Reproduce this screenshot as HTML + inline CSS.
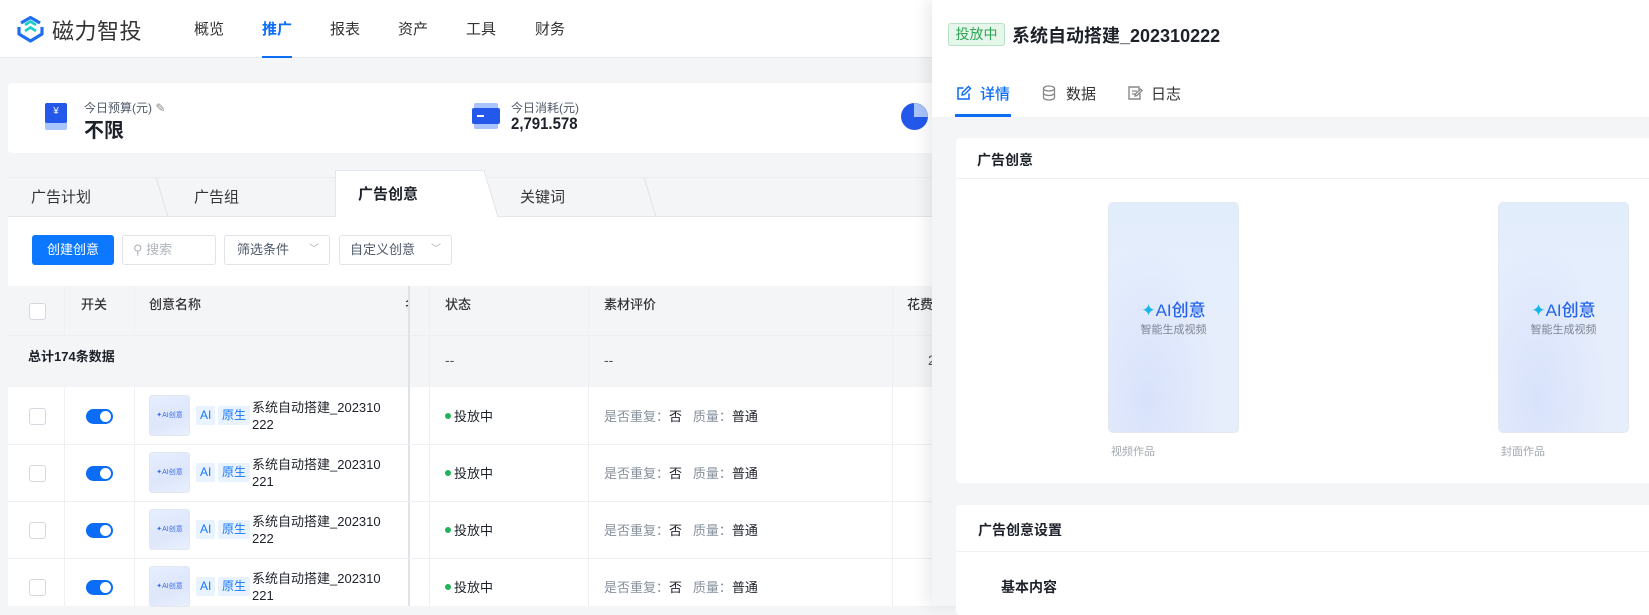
<!DOCTYPE html>
<html><head><meta charset="utf-8">
<style>
*{margin:0;padding:0;box-sizing:border-box}
body{width:1649px;height:606px;overflow:hidden;background:#f4f5f7;font-family:"Liberation Sans","Noto Sans CJK SC",sans-serif;color:#1d2129;position:relative;font-size:14px}
.a{position:absolute;white-space:nowrap}
.hdr{position:absolute;left:0;top:0;width:1649px;height:58px;background:#fff;border-bottom:1px solid #e8eaed}
.nav{font-size:15px;color:#333;top:18px}
.card{position:absolute;background:#fff;border-radius:4px}
.th{font-size:13px;color:#333;font-weight:500}
.cb{position:absolute;width:17px;height:17px;border:1px solid #d5d8de;border-radius:3px;background:#fff}
.tg{position:absolute;width:27px;height:15px;border-radius:8px;background:#0b6cf6}
.tg:after{content:"";position:absolute;right:2px;top:2px;width:11px;height:11px;border-radius:50%;background:#fff}
.thumb{position:absolute;width:41px;height:41px;border:1px solid #e3e7ef;border-radius:3px;background:linear-gradient(160deg,#e6efff,#dde6fb 60%,#e9f0fd);font-size:7px;color:#3a6cf0;text-align:center;line-height:39px}
.tag{position:absolute;height:19px;line-height:19px;padding:0 4px;background:#e8f3ff;color:#1677ff;font-size:12px;border-radius:2px}
.nm{position:absolute;font-size:13px;line-height:17px;color:#1d2129}
.dot{position:absolute;width:6px;height:6px;border-radius:50%;background:#21b35b}
.rowline{position:absolute;left:8px;width:924px;height:1px;background:#eef0f3}
.gl{color:#86909c}
.img{position:absolute;width:131px;height:231px;border:1px solid #e4e8f0;border-radius:5px;background:radial-gradient(ellipse at 30% 85%,#d8e2fb 0%,rgba(216,226,251,0) 55%),linear-gradient(180deg,#e2edfc 0%,#e6eefc 55%,#e6edfb 100%);text-align:center}
.img .t1{position:absolute;left:0;right:0;top:93px;font-size:17px;color:#2563eb;font-weight:500}
.img .t2{position:absolute;left:0;right:0;top:118px;font-size:11px;color:#7d8592}
</style></head><body>

<div class="hdr"></div>
<svg class="a" style="left:15px;top:14px" width="31" height="30" viewBox="0 0 31 30"><path d="M6 9 L15.5 3.5 L25 9 M27 13 V20 L15.5 27 L4 20 V13" fill="none" stroke="#1e6ff0" stroke-width="3.2" stroke-linejoin="round"/><path d="M10 11 L15.5 7.5 L21 11 M10 17 L15.5 13.5 L21 17" fill="none" stroke="#18d0c8" stroke-width="2.8"/></svg>
<div class="a" style="left:52px;top:14px;font-size:22px;color:#333;letter-spacing:0.5px">磁力智投</div>
<div class="a nav" style="left:194px">概览</div>
<div class="a nav" style="left:262px;color:#0b6cf6;font-weight:600">推广</div>
<div class="a" style="left:262px;top:56px;width:30px;height:2px;background:#0b6cf6"></div>
<div class="a nav" style="left:330px">报表</div>
<div class="a nav" style="left:398px">资产</div>
<div class="a nav" style="left:466px">工具</div>
<div class="a nav" style="left:535px">财务</div>

<div class="card" style="left:8px;top:83px;width:940px;height:70px"></div>
<div class="a" style="left:45px;top:103px;width:22px;height:27px;background:#a9c3fb;border-radius:2px"></div>
<div class="a" style="left:45px;top:103px;width:22px;height:20px;background:#2358ea;border-radius:2px;color:#fff;font-size:10px;text-align:center;line-height:18px">¥</div>
<div class="a" style="left:84px;top:99px;font-size:12px;color:#4e5969">今日预算(元) <span style="color:#888">✎</span></div>
<div class="a" style="left:84px;top:114px;font-size:20px;font-weight:700">不限</div>
<div class="a" style="left:474px;top:103px;width:24px;height:26px;background:#a9c3fb;border-radius:2px"></div>
<div class="a" style="left:472px;top:108px;width:28px;height:16px;background:#2358ea;border-radius:2px"></div>
<div class="a" style="left:477px;top:115px;width:7px;height:2px;background:#fff"></div>
<div class="a" style="left:511px;top:99px;font-size:12px;color:#4e5969">今日消耗(元)</div>
<div class="a" style="left:511px;top:114px;font-size:17px;font-weight:700;transform:scaleX(0.88);transform-origin:left">2,791.578</div>
<div class="a" style="left:901px;top:103px;width:27px;height:27px;border-radius:50%;background:#2358ea"></div>
<div class="a" style="left:914px;top:103px;width:14px;height:14px;border-radius:0 14px 0 0;background:#a9c3fb"></div>

<!-- tabs -->
<div class="a" style="left:8px;top:177px;width:924px;height:40px;background:#f4f5f7;border-bottom:1px solid #e4e7ec;border-top:1px solid #eceef2"></div>
<svg class="a" style="left:150px;top:177px" width="540" height="40"><path d="M6 0 L18 40 M494 0 L506 40" stroke="#e1e4ea" fill="none"/></svg>
<div class="a" style="left:335px;top:170px;width:150px;height:47px;background:#fff;border:1px solid #e4e7ec;border-bottom:none"></div>
<svg class="a" style="left:483px;top:170px" width="16" height="47"><path d="M0 0.5 L2 0.5 L15 47 L0 47Z" fill="#fff"/><path d="M1 0.5 L15 47" stroke="#e1e4ea" fill="none"/></svg>
<div class="a" style="left:31px;top:186px;font-size:15px;color:#333">广告计划</div>
<div class="a" style="left:194px;top:186px;font-size:15px;color:#333">广告组</div>
<div class="a" style="left:358px;top:183px;font-size:15px;font-weight:700">广告创意</div>
<div class="a" style="left:520px;top:186px;font-size:15px;color:#333">关键词</div>

<div class="a" style="left:8px;top:217px;width:924px;height:389px;background:#fff"></div>
<div class="a" style="left:32px;top:235px;width:82px;height:30px;background:#0b78ff;border-radius:3px;color:#fff;font-size:13px;text-align:center;line-height:30px">创建创意</div>
<div class="a" style="left:122px;top:235px;width:94px;height:30px;border:1px solid #e0e3e8;border-radius:3px;font-size:13px;color:#b0b5bd;line-height:28px;padding-left:10px">&#9906; 搜索</div>
<div class="a" style="left:224px;top:235px;width:106px;height:30px;border:1px solid #e0e3e8;border-radius:3px;font-size:13px;color:#4e5969;line-height:28px;padding-left:12px">筛选条件<span style="position:absolute;right:10px;color:#aaa;font-size:10px">﹀</span></div>
<div class="a" style="left:339px;top:235px;width:113px;height:30px;border:1px solid #e0e3e8;border-radius:3px;font-size:13px;color:#4e5969;line-height:28px;padding-left:10px">自定义创意<span style="position:absolute;right:10px;color:#aaa;font-size:10px">﹀</span></div>

<!-- table -->
<div class="a" style="left:8px;top:286px;width:924px;height:101px;background:#f4f5f7"></div>
<div class="a" style="left:8px;top:335px;width:924px;height:1px;background:#eceef2"></div>
<div class="cb" style="left:29px;top:303px"></div>
<div class="a th" style="left:81px;top:294px">开关</div>
<div class="a th" style="left:149px;top:294px">创意名称</div>
<div class="a th" style="left:405px;top:294px;width:5px;overflow:hidden">名</div>
<div class="a th" style="left:445px;top:294px">状态</div>
<div class="a th" style="left:604px;top:294px">素材评价</div>
<div class="a th" style="left:907px;top:294px">花费</div>
<div class="a" style="left:28px;top:346px;font-size:13px;font-weight:600">总计174条数据</div>
<div class="a" style="left:445px;top:352px;color:#555">--</div>
<div class="a" style="left:604px;top:352px;color:#555">--</div>
<div class="a" style="left:928px;top:352px;color:#555">2</div>
<div class="a" style="left:408px;top:286px;width:2px;height:320px;background:#dfe2e7"></div>
<div class="a" style="left:64px;top:286px;width:1px;height:50px;background:#eef0f3"></div>
<div class="a" style="left:64px;top:387px;width:1px;height:220px;background:#eef0f3"></div>
<div class="a" style="left:134px;top:286px;width:1px;height:50px;background:#eef0f3"></div>
<div class="a" style="left:134px;top:387px;width:1px;height:220px;background:#eef0f3"></div>
<div class="a" style="left:429px;top:286px;width:1px;height:320px;background:#eef0f3"></div>
<div class="a" style="left:588px;top:286px;width:1px;height:320px;background:#eef0f3"></div>
<div class="a" style="left:892px;top:286px;width:1px;height:320px;background:#eef0f3"></div>

<div class="rowline" style="top:444px"></div>
<div class="rowline" style="top:501px"></div>
<div class="rowline" style="top:558px"></div>

<!-- rows -->
<div class="cb" style="left:29px;top:408px"></div><div class="tg" style="left:86px;top:409px"></div>
<div class="thumb" style="left:149px;top:395px">✦AI创意</div><div class="tag" style="left:196px;top:406px">AI</div><div class="tag" style="left:218px;top:406px">原生</div>
<div class="nm" style="left:252px;top:399px">系统自动搭建_202310<br>222</div>
<div class="dot" style="left:445px;top:413px"></div><div class="a" style="left:454px;top:406px;font-size:13px">投放中</div>
<div class="a" style="left:604px;top:406px;font-size:13px"><span class="gl">是否重复：</span>否&nbsp;&nbsp;&nbsp;<span class="gl">质量：</span>普通</div>

<div class="cb" style="left:29px;top:465px"></div><div class="tg" style="left:86px;top:466px"></div>
<div class="thumb" style="left:149px;top:452px">✦AI创意</div><div class="tag" style="left:196px;top:463px">AI</div><div class="tag" style="left:218px;top:463px">原生</div>
<div class="nm" style="left:252px;top:456px">系统自动搭建_202310<br>221</div>
<div class="dot" style="left:445px;top:470px"></div><div class="a" style="left:454px;top:463px;font-size:13px">投放中</div>
<div class="a" style="left:604px;top:463px;font-size:13px"><span class="gl">是否重复：</span>否&nbsp;&nbsp;&nbsp;<span class="gl">质量：</span>普通</div>

<div class="cb" style="left:29px;top:522px"></div><div class="tg" style="left:86px;top:523px"></div>
<div class="thumb" style="left:149px;top:509px">✦AI创意</div><div class="tag" style="left:196px;top:520px">AI</div><div class="tag" style="left:218px;top:520px">原生</div>
<div class="nm" style="left:252px;top:513px">系统自动搭建_202310<br>222</div>
<div class="dot" style="left:445px;top:527px"></div><div class="a" style="left:454px;top:520px;font-size:13px">投放中</div>
<div class="a" style="left:604px;top:520px;font-size:13px"><span class="gl">是否重复：</span>否&nbsp;&nbsp;&nbsp;<span class="gl">质量：</span>普通</div>

<div class="cb" style="left:29px;top:579px"></div><div class="tg" style="left:86px;top:580px"></div>
<div class="thumb" style="left:149px;top:566px">✦AI创意</div><div class="tag" style="left:196px;top:577px">AI</div><div class="tag" style="left:218px;top:577px">原生</div>
<div class="nm" style="left:252px;top:570px">系统自动搭建_202310<br>221</div>
<div class="dot" style="left:445px;top:584px"></div><div class="a" style="left:454px;top:577px;font-size:13px">投放中</div>
<div class="a" style="left:604px;top:577px;font-size:13px"><span class="gl">是否重复：</span>否&nbsp;&nbsp;&nbsp;<span class="gl">质量：</span>普通</div>

<!-- drawer -->
<div class="a" style="left:932px;top:0;width:717px;height:606px;background:#f4f5f7;box-shadow:-6px 0 14px rgba(0,0,0,0.08)"></div>
<div class="a" style="left:932px;top:0;width:717px;height:117px;background:#fff"></div>
<div class="a" style="left:948px;top:23px;width:57px;height:23px;border:1px solid #b5e3c3;background:#e6f6ea;border-radius:3px;color:#2fa656;font-size:14px;text-align:center;line-height:21px">投放中</div>
<div class="a" style="left:1012px;top:22px;font-size:18px;font-weight:600;color:#1d2129">系统自动搭建_202310222</div>
<svg class="a" style="left:956px;top:85px" width="16" height="16" viewBox="0 0 16 16"><path d="M13 8.5V14H2V3h5.5" fill="none" stroke="#0b6cf6" stroke-width="1.5"/><path d="M6 10l.5-2.5L12.5 1.5 14.5 3.5 8.5 9.5Z" fill="none" stroke="#0b6cf6" stroke-width="1.4"/></svg>
<div class="a" style="left:980px;top:83px;font-size:15px;color:#0b6cf6;font-weight:500">详情</div>
<div class="a" style="left:955px;top:114px;width:56px;height:3px;background:#0b6cf6"></div>
<svg class="a" style="left:1042px;top:85px" width="14" height="16" viewBox="0 0 14 16"><ellipse cx="7" cy="3.5" rx="5.5" ry="2.5" fill="none" stroke="#888" stroke-width="1.3"/><path d="M1.5 3.5v9c0 1.4 2.5 2.5 5.5 2.5s5.5-1.1 5.5-2.5v-9M1.5 8c0 1.4 2.5 2.5 5.5 2.5s5.5-1.1 5.5-2.5" fill="none" stroke="#888" stroke-width="1.3"/></svg>
<div class="a" style="left:1066px;top:83px;font-size:15px;color:#333">数据</div>
<svg class="a" style="left:1127px;top:85px" width="16" height="16" viewBox="0 0 16 16"><path d="M13 8.5V14H2V2h10v3" fill="none" stroke="#888" stroke-width="1.4"/><path d="M5 6h5M5 9h3M8 11l.5-2 5-5 1.5 1.5-5 5Z" fill="none" stroke="#888" stroke-width="1.3"/></svg>
<div class="a" style="left:1151px;top:83px;font-size:15px;color:#333">日志</div>

<div class="card" style="left:956px;top:138px;width:700px;height:345px"></div>
<div class="a" style="left:977px;top:150px;font-size:14px;font-weight:600">广告创意</div>
<div class="a" style="left:956px;top:178px;width:693px;height:1px;background:#eef0f3"></div>
<div class="img" style="left:1108px;top:202px"><div class="t1"><span style="color:#19b7e6">✦</span>AI创意</div><div class="t2">智能生成视频</div></div>
<div class="a" style="left:1111px;top:443px;font-size:11px;color:#a3a8b0">视频作品</div>
<div class="img" style="left:1498px;top:202px"><div class="t1"><span style="color:#19b7e6">✦</span>AI创意</div><div class="t2">智能生成视频</div></div>
<div class="a" style="left:1501px;top:443px;font-size:11px;color:#a3a8b0">封面作品</div>

<div class="card" style="left:956px;top:505px;width:700px;height:110px"></div>
<div class="a" style="left:978px;top:520px;font-size:14px;font-weight:600">广告创意设置</div>
<div class="a" style="left:956px;top:551px;width:693px;height:1px;background:#eef0f3"></div>
<div class="a" style="left:1001px;top:577px;font-size:14px;font-weight:600">基本内容</div>
</body></html>
